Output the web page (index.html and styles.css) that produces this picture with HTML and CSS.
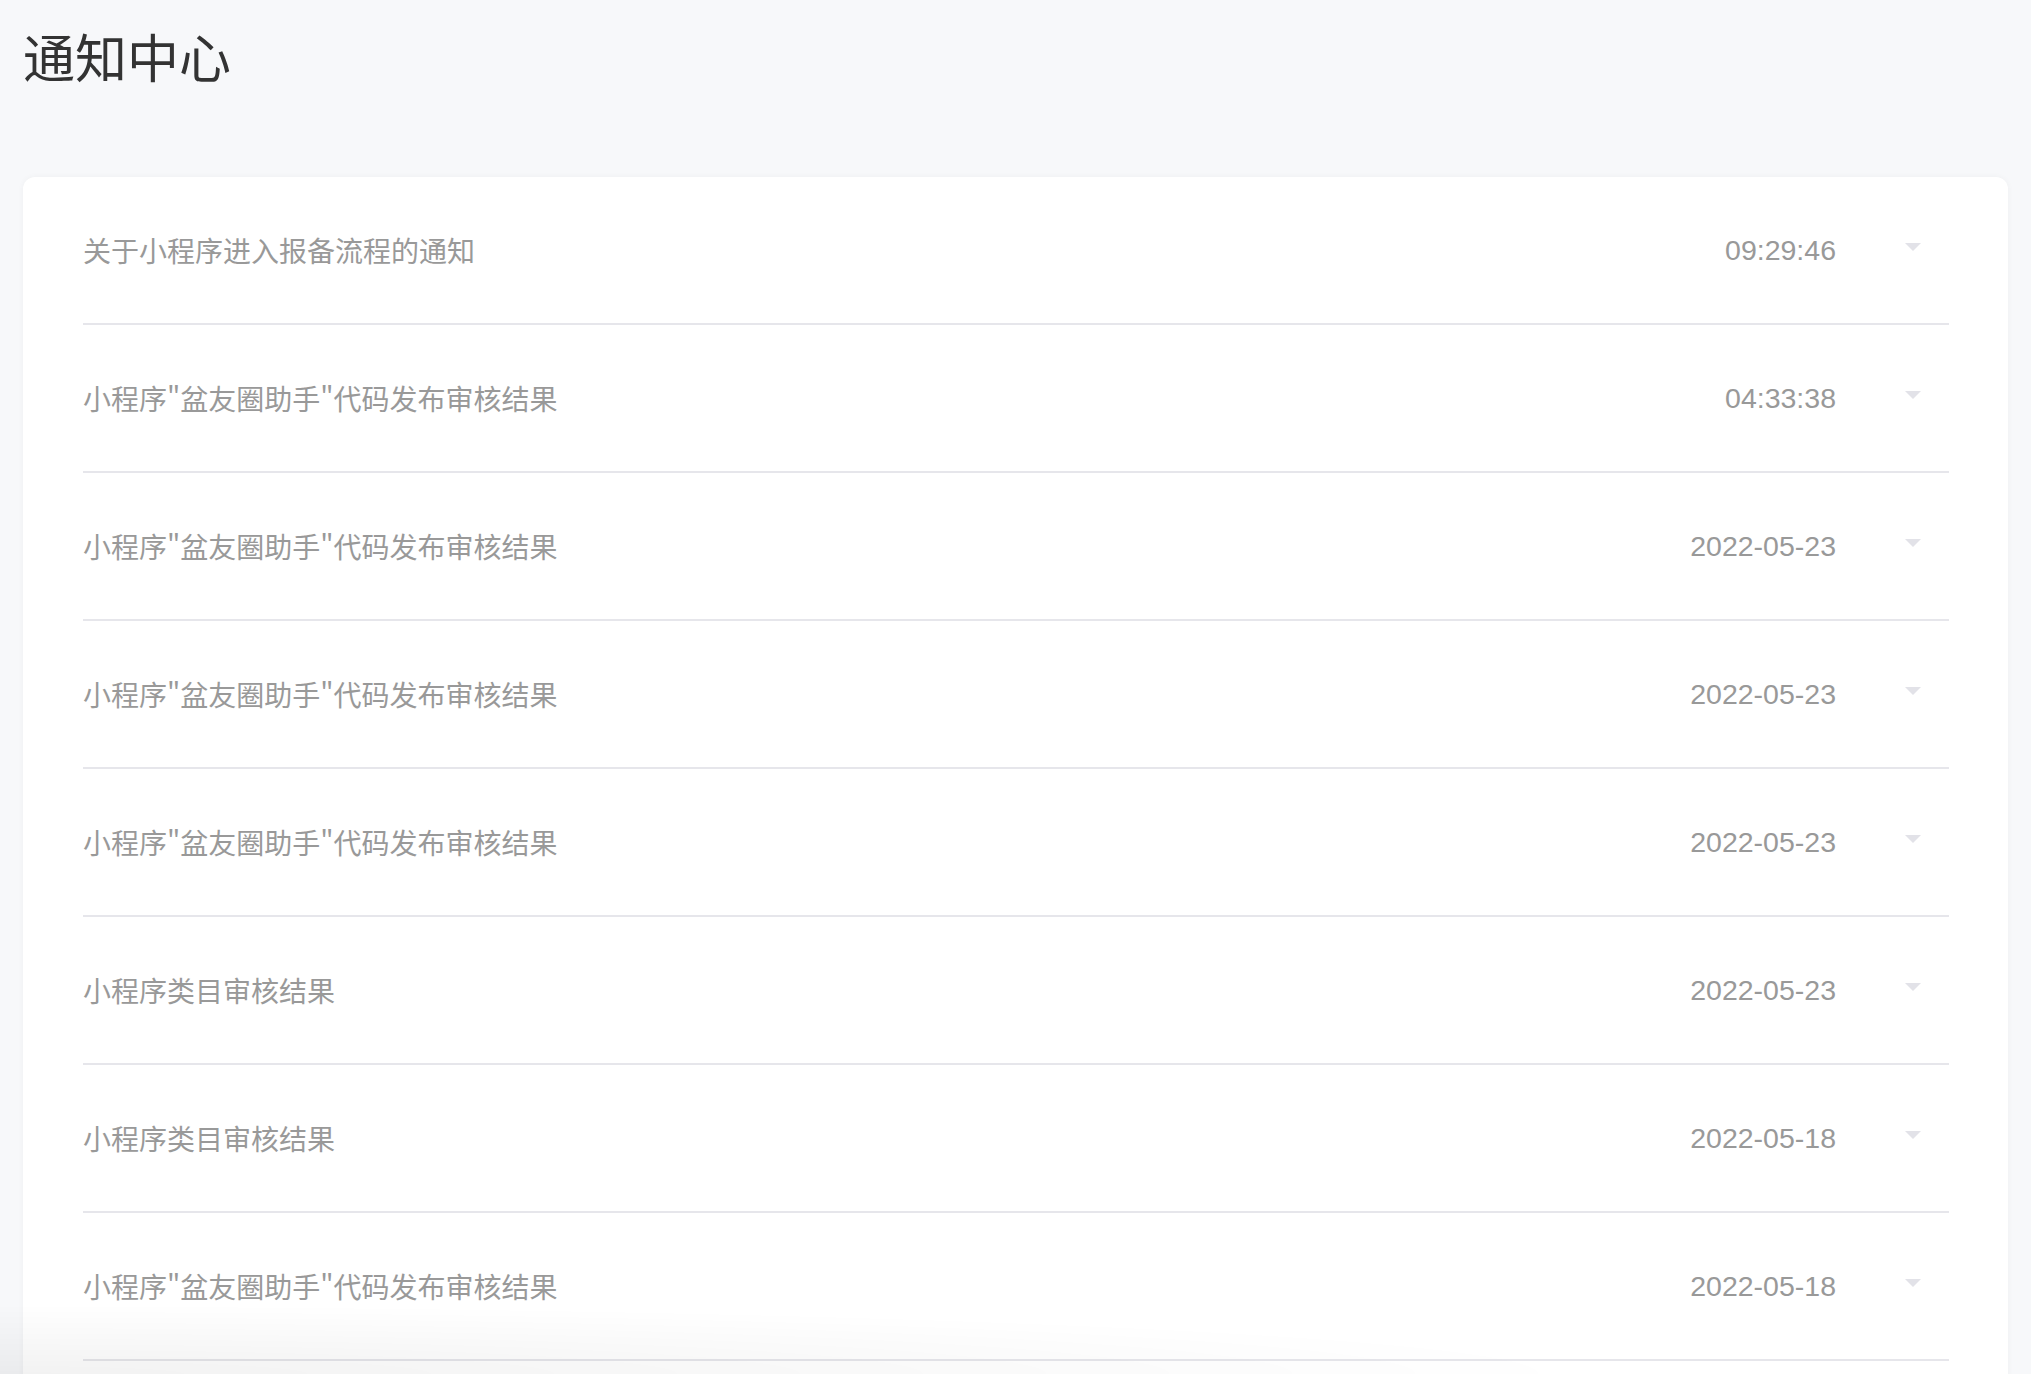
FILE: index.html
```html
<!DOCTYPE html>
<html lang="zh-CN">
<head>
  <meta charset="UTF-8">
  <title>通知中心</title>
  <link rel="stylesheet" href="styles.css">
</head>
<body>
  <h1 class="page-title">通知中心</h1>

  <div class="notice-card">
    <div class="notice-row">
      <span class="notice-title">关于小程序进入报备流程的通知</span>
      <span class="notice-time">09:29:46</span>
      <span class="notice-arrow"></span>
    </div>
    <div class="notice-row">
      <span class="notice-title">小程序"盆友圈助手"代码发布审核结果</span>
      <span class="notice-time">04:33:38</span>
      <span class="notice-arrow"></span>
    </div>
    <div class="notice-row">
      <span class="notice-title">小程序"盆友圈助手"代码发布审核结果</span>
      <span class="notice-time">2022-05-23</span>
      <span class="notice-arrow"></span>
    </div>
    <div class="notice-row">
      <span class="notice-title">小程序"盆友圈助手"代码发布审核结果</span>
      <span class="notice-time">2022-05-23</span>
      <span class="notice-arrow"></span>
    </div>
    <div class="notice-row">
      <span class="notice-title">小程序"盆友圈助手"代码发布审核结果</span>
      <span class="notice-time">2022-05-23</span>
      <span class="notice-arrow"></span>
    </div>
    <div class="notice-row">
      <span class="notice-title">小程序类目审核结果</span>
      <span class="notice-time">2022-05-23</span>
      <span class="notice-arrow"></span>
    </div>
    <div class="notice-row">
      <span class="notice-title">小程序类目审核结果</span>
      <span class="notice-time">2022-05-18</span>
      <span class="notice-arrow"></span>
    </div>
    <div class="notice-row">
      <span class="notice-title">小程序"盆友圈助手"代码发布审核结果</span>
      <span class="notice-time">2022-05-18</span>
      <span class="notice-arrow"></span>
    </div>
  </div>

  <div class="bottom-fade"></div>
</body>
</html>
```

FILE: styles.css
```css
    html, body {
      margin: 0;
      background: #f7f8fa;
    }

    body {
      font-family: "Liberation Sans", "Noto Sans CJK SC", sans-serif;
      padding: 25px 23px 0;
    }

    .page-title {
      margin: 0;
      font-family: "Noto Sans CJK SC", sans-serif;
      font-size: 52px;
      font-weight: 400;
      line-height: 62px;
      color: #333;
    }

    .notice-card {
      margin-top: 90px;
      background: white;
      border-radius: 12px;
      box-shadow: 0 0 6px rgba(0,0,0,0.04);
      padding: 0 59px 60px 60px;
    }

    .notice-row {
      display: flex;
      align-items: center;
      height: 146px;
      border-bottom: 2px solid #e6e6eb;
    }

    .notice-title {
      flex: 1;
      font-family: "Noto Sans CJK SC", sans-serif;
      font-size: 28px;
      color: #999;
    }

    .notice-time {
      font-size: 28.5px;
      color: #999;
    }

    .notice-arrow {
      width: 0;
      height: 0;
      margin: 0 28px 7px 69px;
      border-left: 8px solid transparent;
      border-right: 8px solid transparent;
      border-top: 8px solid #e2e2e8;
    }

    .bottom-fade {
      position: fixed;
      left: 0;
      right: 0;
      bottom: 0;
      height: 90px;
      pointer-events: none;
      background: radial-gradient(ellipse 1600px 70px at 0 100%, rgba(0,0,0,0.05), rgba(0,0,0,0));
    }
```
